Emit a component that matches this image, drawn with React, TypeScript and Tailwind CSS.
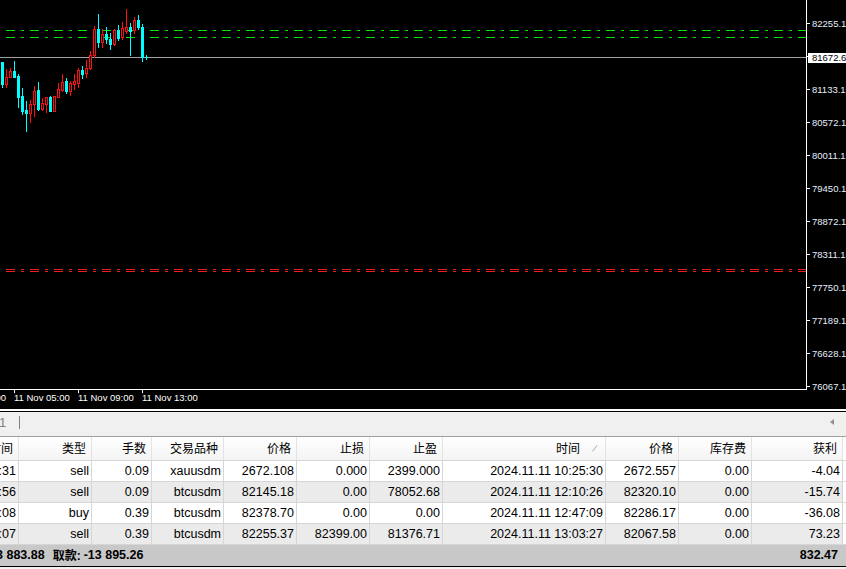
import React from "react";

// [bodyTop, bodyBottom, wickTop, wickBottom, bull]
const candles: [number, number, number, number, number][] = [
  [62, 84, 62, 87, 1],
  [77, 84, 69, 87, 0],
  [71, 77, 68, 77, 0],
  [71, 77, 61, 77, 1],
  [76, 97, 74, 107, 1],
  [96, 111, 88, 114, 1],
  [110, 113, 101, 131, 1],
  [104, 113, 100, 122, 0],
  [91, 104, 86, 116, 0],
  [90, 109, 82, 110, 1],
  [103, 109, 98, 110, 0],
  [97, 104, 97, 112, 0],
  [97, 111, 96, 111, 1],
  [96, 111, 96, 111, 0],
  [89, 97, 83, 97, 0],
  [82, 90, 74, 91, 0],
  [81, 91, 78, 93, 1],
  [83, 91, 81, 95, 0],
  [81, 84, 74, 89, 0],
  [70, 83, 68, 87, 0],
  [70, 74, 66, 78, 1],
  [68, 73, 60, 77, 0],
  [55, 68, 51, 69, 0],
  [29, 55, 26, 57, 0],
  [29, 42, 14, 47, 1],
  [34, 42, 29, 47, 0],
  [34, 39, 27, 43, 1],
  [39, 44, 33, 49, 1],
  [30, 44, 29, 45, 0],
  [30, 38, 25, 40, 1],
  [28, 37, 22, 39, 0],
  [27, 31, 9, 33, 0],
  [27, 31, 23, 55, 1],
  [20, 30, 17, 33, 0],
  [20, 27, 15, 29, 1],
  [27, 57, 24, 61, 1],
  [57, 57, 55, 59, 1],
];

const prices = [
  "82255.10",
  "81672.69",
  "81133.10",
  "80572.10",
  "80011.10",
  "79450.10",
  "78872.10",
  "78311.10",
  "77750.10",
  "77189.10",
  "76628.10",
  "76067.10",
];

const cols = [
  { w: "w-[19px]", h: "时间" },
  { w: "w-[73px]", h: "类型" },
  { w: "w-[60px]", h: "手数" },
  { w: "w-[72px]", h: "交易品种" },
  { w: "w-[73px]", h: "价格" },
  { w: "w-[73px]", h: "止损" },
  { w: "w-[73px]", h: "止盈" },
  { w: "w-[163px]", h: "时间" },
  { w: "w-[73px]", h: "价格" },
  { w: "w-[73px]", h: "库存费" },
  { w: "w-[91px]", h: "获利" },
];

const rows = [
  [":31", "sell", "0.09", "xauusdm", "2672.108", "0.000", "2399.000", "2024.11.11 10:25:30", "2672.557", "0.00", "-4.04"],
  [":56", "sell", "0.09", "btcusdm", "82145.18", "0.00", "78052.68", "2024.11.11 12:10:26", "82320.10", "0.00", "-15.74"],
  [":08", "buy", "0.39", "btcusdm", "82378.70", "0.00", "0.00", "2024.11.11 12:47:09", "82286.17", "0.00", "-36.08"],
  [":07", "sell", "0.39", "btcusdm", "82255.37", "82399.00", "81376.71", "2024.11.11 13:03:27", "82067.58", "0.00", "73.23"],
];

function Chart() {
  return (
    <svg width={807} height={390} shapeRendering="crispEdges" className="block">
      <line x1={6} x2={806} y1={30.5} y2={30.5} stroke="#00e600" strokeDasharray="9 6 3 6" />
      <line x1={6} x2={806} y1={37.5} y2={37.5} stroke="#00e600" strokeDasharray="9 6 3 6" />
      <line x1={6} x2={806} y1={269.5} y2={269.5} stroke="#e8201c" strokeDasharray="9 6 3 6" />
      <line x1={6} x2={806} y1={271.5} y2={271.5} stroke="#e8201c" strokeDasharray="9 6 3 6" />
      <line x1={0} x2={806} y1={57.5} y2={57.5} stroke="#9ca2a8" />
      {candles.map(([bt, bb, wt, wb, up], i) => {
        const x = 1 + 4 * i;
        const c = up ? "#00ffff" : "#ff1010";
        return (
          <g key={i}>
            <line x1={x + 1.5} x2={x + 1.5} y1={wt} y2={wb + 1} stroke={c} />
            {up ? (
              <rect x={x} y={bt} width={3} height={bb - bt + 1} fill={c} />
            ) : (
              <rect x={x + 0.5} y={bt + 0.5} width={2} height={bb - bt} fill="#000" stroke={c} />
            )}
          </g>
        );
      })}
      <line x1={806.5} x2={806.5} y1={0} y2={390} stroke="#fff" />
      <line x1={0} x2={807} y1={389.5} y2={389.5} stroke="#fff" />
    </svg>
  );
}

export default function App() {
  return (
    <div className="w-[846px] h-[569px] overflow-hidden bg-[#f0f0f0] font-['Liberation_Sans','Noto_Sans_CJK_SC',sans-serif] text-black">
      {/* chart */}
      <div className="flex h-[409px] bg-black">
        <div className="flex w-[807px] shrink-0 flex-col">
          <Chart />
          <div className="flex h-[19px] text-[9.5px] leading-[10px] text-white whitespace-nowrap">
            <div className="flex w-[14px] justify-end overflow-hidden pr-[8px] pt-[3px]">00</div>
            {["11 Nov 05:00", "11 Nov 09:00", "11 Nov 13:00"].map((t) => (
              <div key={t} className="flex w-[64px] flex-col">
                <div className="h-[3px] w-px bg-white" />
                <div>{t}</div>
              </div>
            ))}
          </div>
        </div>
        <div className="relative flex flex-1 flex-col pt-[7px] text-[9.5px] leading-[10px] text-[#e6eefa] whitespace-nowrap">
          {prices.map((p) => (
            <div key={p} className="flex h-[33px] shrink-0 items-center">
              <span className="h-px w-[3px] bg-white" />
              <span className="ml-[2px]">{p}</span>
            </div>
          ))}
          <div className="absolute left-[1px] right-0 top-[53px] h-[10px] bg-white pl-[4px] text-black">81672.69</div>
        </div>
      </div>
      <div className="h-[2px] bg-white" />
      <div className="h-px bg-black" />

      {/* tab bar */}
      <div className="flex h-[25px] items-center border-b border-[#a0a0a0] bg-[#f0f0f0] pb-[4px]">
        <span className="-ml-[1px] text-[13px] leading-[13px] text-[#808080]">1</span>
        <div className="ml-[13px] h-[13px] w-px bg-[#808080]" />
        <svg width={4} height={6} className="ml-auto mr-[12px]">
          <polygon points="4,0 4,6 0,3" fill="#909090" />
        </svg>
      </div>

      {/* header */}
      <div className="flex h-[24px] border-b border-[#d6d6d6] bg-gradient-to-b from-white to-[#f4f4f4] text-[12px]">
        {cols.map((c, i) => (
          <div
            key={i}
            className={`${c.w} flex shrink-0 items-center justify-end overflow-hidden whitespace-nowrap border-r border-[#e3e3e3] ${i === 7 ? "pr-[7px]" : "pr-[5px]"}`}
          >
            <span className="shrink-0">{c.h}</span>
            {i === 7 && (
              <svg width={6} height={7} className="ml-[12px] shrink-0">
                <line x1={0.5} y1={6.5} x2={5} y2={0.5} stroke="#a8a8a8" />
              </svg>
            )}
          </div>
        ))}
        <div className="flex-1 bg-white" />
      </div>

      {/* rows */}
      {rows.map((r, ri) => (
        <div
          key={ri}
          className={`flex h-[21px] border-b border-[#d6d6d6] text-[12.5px] ${ri % 2 ? "bg-[#ebebeb]" : "bg-white"}`}
        >
          {r.map((v, ci) => (
            <div
              key={ci}
              className={`${cols[ci].w} flex shrink-0 items-center justify-end overflow-hidden whitespace-nowrap border-r border-[#d6d6d6] pr-[2px]`}
            >
              <span className="shrink-0">{v}</span>
            </div>
          ))}
          <div className="flex-1 bg-white" />
        </div>
      ))}

      {/* footer */}
      <div className="flex h-[21px] items-center bg-[#c8c8c8] text-[12.5px] font-bold whitespace-nowrap">
        <span className="-ml-[4px]">3 883.88</span>
        <span className="ml-[8px] text-[12px]">取款:</span>
        <span className="ml-[3px]">-13 895.26</span>
        <span className="ml-auto pr-[8px]">832.47</span>
      </div>
      <div className="h-px bg-black" />
    </div>
  );
}
